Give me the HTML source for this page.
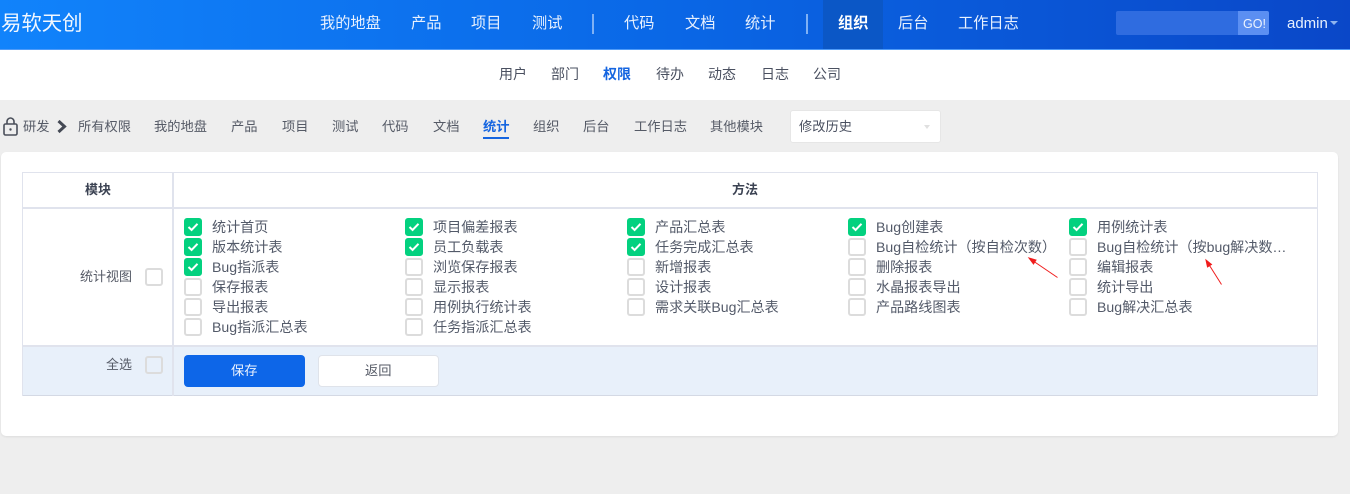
<!DOCTYPE html>
<html lang="zh-CN">
<head>
<meta charset="utf-8">
<title>权限</title>
<style>
html,body{margin:0;padding:0}
body{width:1350px;height:494px;overflow:hidden;position:relative;background:#eee;font-family:"Liberation Sans","Noto Sans CJK SC",sans-serif;color:#3c4353;font-size:14px}
.a{position:absolute;box-sizing:border-box}
.t{position:absolute;white-space:nowrap;line-height:20px}
#hd{left:0;top:0;width:1350px;height:49px;background:linear-gradient(90deg,#1183fb 0,#0a67e6 50%,#0a47c8 100%)}
#hd .t{color:#e8f1fe;font-size:15.2px;top:14px}
.sep{position:absolute;top:14px;width:2px;height:20px;background:#7fb1f5}
#sub{left:0;top:49px;width:1350px;height:51px;background:#fff;border-top:1px solid #4f9bf8}
#sub .t{top:14px;color:#4a5060}
.n .t{font-size:13.25px;top:117px;color:#555a66}
#card{left:1px;top:152px;width:1337px;height:284px;background:#fff;border-radius:5px;box-shadow:0 1px 2px rgba(0,0,0,.07)}
.c{position:absolute;box-sizing:border-box;width:18px;height:18px;border:2px solid #dcdcdc;border-radius:3px;background:#fff}
.c.k{background:#03d17f;border-color:#03d17f}
.c.k svg{position:absolute;left:1px;top:1px}
.r .t{color:#535a69;font-size:14.1px}
.ln{position:absolute;background:#e0e3ed}
</style>
</head>
<body>
<div class="a" id="hd">
  <span class="t" style="left:1px;top:14px;font-size:20.400px;color:#f3f8ff">易软天创</span>
  <span class="t" style="left:320px">我的地盘</span>
  <span class="t" style="left:411px">产品</span>
  <span class="t" style="left:471px">项目</span>
  <span class="t" style="left:532px">测试</span>
  <i class="sep" style="left:592px"></i>
  <span class="t" style="left:624px">代码</span>
  <span class="t" style="left:685px">文档</span>
  <span class="t" style="left:745px">统计</span>
  <i class="sep" style="left:806px"></i>
  <div class="a" style="left:823px;top:0;width:60px;height:49px;background:#0b57c6"></div>
  <span class="t" style="left:838px;font-weight:700;color:#fff">组织</span>
  <span class="t" style="left:898px">后台</span>
  <span class="t" style="left:958px">工作日志</span>
  <div class="a" style="left:1116px;top:11px;width:123px;height:24px;background:#2f6ce0;border-radius:2px 0 0 2px"></div>
  <div class="a" style="left:1238px;top:11px;width:31px;height:24px;background:#5b8ff2;border-radius:0 2px 2px 0"></div>
  <span class="t" style="left:1243px;top:14px;font-size:12.500px;line-height:20px;color:#eef4fe">GO!</span>
  <span class="t" style="left:1287px;top:14px;font-size:15px">admin</span>
  <div class="a" style="left:1330px;top:21px;width:0;height:0;border-left:4px solid transparent;border-right:4px solid transparent;border-top:4px solid #8fb4ee"></div>
</div>

<div class="a" id="sub">
  <span class="t" style="left:499px">用户</span>
  <span class="t" style="left:551px">部门</span>
  <span class="t" style="left:603px;color:#1565e0;font-weight:700">权限</span>
  <span class="t" style="left:656px">待办</span>
  <span class="t" style="left:708px">动态</span>
  <span class="t" style="left:761px">日志</span>
  <span class="t" style="left:813px">公司</span>
</div>

<div class="n">
  <svg class="a" style="left:3px;top:117px" width="16" height="19" viewBox="0 0 16 19" fill="none" stroke="#4a4f5a" stroke-width="1.6"><rect x="1" y="7" width="13" height="11" rx="1.500"/><path d="M4 7V4.500a3.500 3.500 0 0 1 7 0V7"/><circle cx="7.500" cy="12.500" r="1.200" fill="#4a4f5a" stroke="none"/></svg>
  <span class="t" style="left:23px">研发</span>
  <svg class="a" style="left:57px;top:120px" width="11" height="14" viewBox="0 0 11 14" fill="none" stroke="#444954" stroke-width="3"><path d="M1.500 1 7.500 6.500 1.500 12"/></svg>
  <span class="t" style="left:78px">所有权限</span>
  <span class="t" style="left:154px">我的地盘</span>
  <span class="t" style="left:231px">产品</span>
  <span class="t" style="left:282px">项目</span>
  <span class="t" style="left:332px">测试</span>
  <span class="t" style="left:382px">代码</span>
  <span class="t" style="left:433px">文档</span>
  <span class="t" style="left:483px;color:#1565e0;font-weight:700">统计</span>
  <div class="a" style="left:483px;top:137px;width:26px;height:2px;background:#1565e0"></div>
  <span class="t" style="left:533px">组织</span>
  <span class="t" style="left:583px">后台</span>
  <span class="t" style="left:634px">工作日志</span>
  <span class="t" style="left:710px">其他模块</span>
  <div class="a" style="left:790px;top:110px;width:151px;height:33px;background:#fff;border:1px solid #e6e6e6;border-radius:3px"></div>
  <span class="t" style="left:799px;color:#4a5060">修改历史</span>
  <div class="a" style="left:924px;top:125px;width:0;height:0;border-left:3.500px solid transparent;border-right:3.500px solid transparent;border-top:4px solid #e0e0e0"></div>
</div>

<div class="a" id="card"></div>

<div class="a" style="left:22px;top:346px;width:1296px;height:50px;background:#e8f0fa"></div>
<div class="ln" style="left:22px;top:172px;width:1296px;height:1px"></div>
<div class="ln" style="left:22px;top:207px;width:1296px;height:2px"></div>
<div class="ln" style="left:22px;top:345px;width:1296px;height:2px"></div>
<div class="ln" style="left:22px;top:395px;width:1296px;height:1px;background:#d4d9e4"></div>
<div class="ln" style="left:22px;top:172px;width:1px;height:224px"></div>
<div class="ln" style="left:172px;top:172px;width:2px;height:224px"></div>
<div class="ln" style="left:1317px;top:172px;width:1px;height:224px"></div>

<span class="t" style="left:85px;top:180px;font-size:13px;font-weight:700;color:#3c4353">模块</span>
<span class="t" style="left:732px;top:180px;font-size:13px;font-weight:700;color:#3c4353">方法</span>
<span class="t" style="left:80px;top:267px;font-size:13px;color:#555a66">统计视图</span>
<div class="c" style="left:145px;top:268px"></div>
<span class="t" style="left:106px;top:355px;font-size:13px;color:#555a66">全选</span>
<div class="c" style="left:145px;top:356px;background:#e8f0fa"></div>

<div class="r">
  <div class="c k" style="left:184px;top:218px"><svg width="12" height="12" viewBox="0 0 12 12" fill="none" stroke="#fff" stroke-width="2"><path d="M1.500 6 4.600 9 10.500 2.800"/></svg></div><span class="t" style="left:212px;top:217px">统计首页</span>
  <div class="c k" style="left:184px;top:238px"><svg width="12" height="12" viewBox="0 0 12 12" fill="none" stroke="#fff" stroke-width="2"><path d="M1.500 6 4.600 9 10.500 2.800"/></svg></div><span class="t" style="left:212px;top:237px">版本统计表</span>
  <div class="c k" style="left:184px;top:258px"><svg width="12" height="12" viewBox="0 0 12 12" fill="none" stroke="#fff" stroke-width="2"><path d="M1.500 6 4.600 9 10.500 2.800"/></svg></div><span class="t" style="left:212px;top:257px">Bug指派表</span>
  <div class="c" style="left:184px;top:278px"></div><span class="t" style="left:212px;top:277px">保存报表</span>
  <div class="c" style="left:184px;top:298px"></div><span class="t" style="left:212px;top:297px">导出报表</span>
  <div class="c" style="left:184px;top:318px"></div><span class="t" style="left:212px;top:317px">Bug指派汇总表</span>

  <div class="c k" style="left:405px;top:218px"><svg width="12" height="12" viewBox="0 0 12 12" fill="none" stroke="#fff" stroke-width="2"><path d="M1.500 6 4.600 9 10.500 2.800"/></svg></div><span class="t" style="left:433px;top:217px">项目偏差报表</span>
  <div class="c k" style="left:405px;top:238px"><svg width="12" height="12" viewBox="0 0 12 12" fill="none" stroke="#fff" stroke-width="2"><path d="M1.500 6 4.600 9 10.500 2.800"/></svg></div><span class="t" style="left:433px;top:237px">员工负载表</span>
  <div class="c" style="left:405px;top:258px"></div><span class="t" style="left:433px;top:257px">浏览保存报表</span>
  <div class="c" style="left:405px;top:278px"></div><span class="t" style="left:433px;top:277px">显示报表</span>
  <div class="c" style="left:405px;top:298px"></div><span class="t" style="left:433px;top:297px">用例执行统计表</span>
  <div class="c" style="left:405px;top:318px"></div><span class="t" style="left:433px;top:317px">任务指派汇总表</span>

  <div class="c k" style="left:627px;top:218px"><svg width="12" height="12" viewBox="0 0 12 12" fill="none" stroke="#fff" stroke-width="2"><path d="M1.500 6 4.600 9 10.500 2.800"/></svg></div><span class="t" style="left:655px;top:217px">产品汇总表</span>
  <div class="c k" style="left:627px;top:238px"><svg width="12" height="12" viewBox="0 0 12 12" fill="none" stroke="#fff" stroke-width="2"><path d="M1.500 6 4.600 9 10.500 2.800"/></svg></div><span class="t" style="left:655px;top:237px">任务完成汇总表</span>
  <div class="c" style="left:627px;top:258px"></div><span class="t" style="left:655px;top:257px">新增报表</span>
  <div class="c" style="left:627px;top:278px"></div><span class="t" style="left:655px;top:277px">设计报表</span>
  <div class="c" style="left:627px;top:298px"></div><span class="t" style="left:655px;top:297px">需求关联Bug汇总表</span>

  <div class="c k" style="left:848px;top:218px"><svg width="12" height="12" viewBox="0 0 12 12" fill="none" stroke="#fff" stroke-width="2"><path d="M1.500 6 4.600 9 10.500 2.800"/></svg></div><span class="t" style="left:876px;top:217px">Bug创建表</span>
  <div class="c" style="left:848px;top:238px"></div><span class="t" style="left:876px;top:237px">Bug自检统计（按自检次数）</span>
  <div class="c" style="left:848px;top:258px"></div><span class="t" style="left:876px;top:257px">删除报表</span>
  <div class="c" style="left:848px;top:278px"></div><span class="t" style="left:876px;top:277px">水晶报表导出</span>
  <div class="c" style="left:848px;top:298px"></div><span class="t" style="left:876px;top:297px">产品路线图表</span>

  <div class="c k" style="left:1069px;top:218px"><svg width="12" height="12" viewBox="0 0 12 12" fill="none" stroke="#fff" stroke-width="2"><path d="M1.500 6 4.600 9 10.500 2.800"/></svg></div><span class="t" style="left:1097px;top:217px">用例统计表</span>
  <div class="c" style="left:1069px;top:238px"></div><span class="t" style="left:1097px;top:237px">Bug自检统计（按bug解决数…</span>
  <div class="c" style="left:1069px;top:258px"></div><span class="t" style="left:1097px;top:257px">编辑报表</span>
  <div class="c" style="left:1069px;top:278px"></div><span class="t" style="left:1097px;top:277px">统计导出</span>
  <div class="c" style="left:1069px;top:298px"></div><span class="t" style="left:1097px;top:297px">Bug解决汇总表</span>
</div>

<div class="a" style="left:184px;top:355px;width:121px;height:32px;background:#0d66e8;border-radius:4px"></div>
<span class="t" style="left:231px;top:361px;font-size:13.250px;color:#eaf2fe">保存</span>
<div class="a" style="left:318px;top:355px;width:121px;height:32px;background:#fff;border:1px solid #dfe3ea;border-radius:4px"></div>
<span class="t" style="left:365px;top:361px;font-size:13.250px;color:#555a66">返回</span>

<svg class="a" style="left:1020px;top:250px" width="210" height="40" viewBox="0 0 210 40" fill="none" stroke="#f01c1c" stroke-width="1">
  <path d="M37.500 27.500 11 9.500"/>
  <path d="M9 8 16 10 13.500 14Z" fill="#f01c1c"/>
  <path d="M201.500 34.500 187 11.500"/>
  <path d="M186 10 191.500 14.500 187.500 17Z" fill="#f01c1c"/>
</svg>
</body>
</html>
